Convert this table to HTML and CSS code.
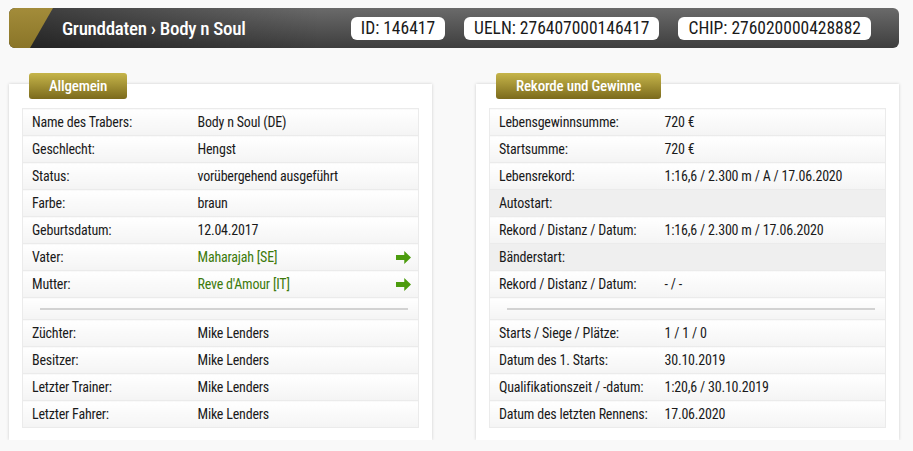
FILE: index.html
```html
<!DOCTYPE html>
<html lang="de">
<head>
    <meta charset="UTF-8">
    <title>Grunddaten - Body n Soul</title>
    <link rel="stylesheet" href="styles.css">
</head>
<body>
    <div class="headbar">
        <h1>Grunddaten › Body n Soul</h1>
        <div class="ids">
            <span class="pill">ID: 146417</span>
            <span class="pill">UELN: 276407000146417</span>
            <span class="pill">CHIP: 276020000428882</span>
        </div>
    </div>

    <div class="columns">
        <div class="panel">
            <div class="tab">Allgemein</div>
            <table class="data">
                <colgroup><col class="lbl-col"><col></colgroup>
                <tr><td>Name des Trabers:</td><td>Body n Soul (DE)</td></tr>
                <tr><td>Geschlecht:</td><td>Hengst</td></tr>
                <tr><td>Status:</td><td>vorübergehend ausgeführt</td></tr>
                <tr><td>Farbe:</td><td>braun</td></tr>
                <tr><td>Geburtsdatum:</td><td>12.04.2017</td></tr>
                <tr><td>Vater:</td><td><a href="#" class="link">Maharajah [SE]</a><span class="arrow"></span></td></tr>
                <tr><td>Mutter:</td><td><a href="#" class="link">Reve d'Amour [IT]</a><span class="arrow"></span></td></tr>
                <tr class="sep"><td colspan="2"><hr></td></tr>
                <tr><td>Züchter:</td><td>Mike Lenders</td></tr>
                <tr><td>Besitzer:</td><td>Mike Lenders</td></tr>
                <tr><td>Letzter Trainer:</td><td>Mike Lenders</td></tr>
                <tr><td>Letzter Fahrer:</td><td>Mike Lenders</td></tr>
            </table>
        </div>

        <div class="panel">
            <div class="tab">Rekorde und Gewinne</div>
            <table class="data">
                <colgroup><col class="lbl-col"><col></colgroup>
                <tr><td>Lebensgewinnsumme:</td><td>720 €</td></tr>
                <tr><td>Startsumme:</td><td>720 €</td></tr>
                <tr><td>Lebensrekord:</td><td>1:16,6 / 2.300 m / A / 17.06.2020</td></tr>
                <tr class="group"><td colspan="2">Autostart:</td></tr>
                <tr><td>Rekord / Distanz / Datum:</td><td>1:16,6 / 2.300 m / 17.06.2020</td></tr>
                <tr class="group"><td colspan="2">Bänderstart:</td></tr>
                <tr><td>Rekord / Distanz / Datum:</td><td>- / -</td></tr>
                <tr class="sep"><td colspan="2"><hr></td></tr>
                <tr><td>Starts / Siege / Plätze:</td><td>1 / 1 / 0</td></tr>
                <tr><td>Datum des 1. Starts:</td><td>30.10.2019</td></tr>
                <tr><td>Qualifikationszeit / -datum:</td><td>1:20,6 / 30.10.2019</td></tr>
                <tr><td>Datum des letzten Rennens:</td><td>17.06.2020</td></tr>
            </table>
        </div>
    </div>
</body>
</html>
```

FILE: styles.css
```css
body {
    font-family: Roboto, "Liberation Sans", sans-serif;
    font-stretch: 80%;
    background-color: #f9f9f9;
    color: #1a1a1a;
    margin: 0;
    padding: 8px 14px 0 9px;
}
.headbar {
    position: relative;
    display: flex;
    align-items: center;
    justify-content: space-between;
    height: 40px;
    padding: 0 28px 0 53px;
    border-radius: 6px;
    overflow: hidden;
    background: linear-gradient(to right, rgba(0,0,0,0.45), rgba(0,0,0,0) 35%),
                linear-gradient(to bottom, #6a6a6a, #3e3e3e);
}
.headbar::before {
    content: "";
    position: absolute;
    left: 0;
    top: 0;
    bottom: 0;
    width: 45px;
    background: linear-gradient(to bottom, #a38c3a, #8a7528);
    clip-path: polygon(0 0, 44px 0, 21px 100%, 0 100%);
}
.headbar h1 {
    margin: 0;
    color: white;
    font-size: 19px;
    font-weight: 500;
    letter-spacing: -0.3px;
}
.ids {
    display: flex;
    gap: 19px;
}
.pill {
    background: white;
    border-radius: 6px;
    height: 23px;
    line-height: 23px;
    padding: 0 10px;
    font-size: 17.5px;
    color: #1a1a1a;
}
.columns {
    display: flex;
    gap: 44px;
    margin-top: 36px;
}
.panel {
    flex: 1;
    background: white;
    padding: 0 13px 12px;
    box-shadow: 0 0 3px rgba(0,0,0,0.18);
}
.tab {
    width: fit-content;
    margin: -11px 0 0 7px;
    height: 26px;
    line-height: 26px;
    padding: 0 20px;
    border-radius: 3px;
    background: linear-gradient(to bottom, #c6b54a, #7b6a1c);
    color: white;
    font-size: 15px;
    font-weight: 500;
    letter-spacing: -0.2px;
}
.data {
    width: 100%;
    table-layout: fixed;
    border-collapse: collapse;
    margin-top: 9px;
    font-size: 14px;
    letter-spacing: -0.2px;
}
.lbl-col {
    width: 166px;
}
.data td {
    height: 26px;
    padding: 0 9px;
    white-space: nowrap;
    border-top: 1px solid #ebebeb;
    border-bottom: 1px solid #ebebeb;
    background: linear-gradient(to bottom, #ffffff, #f4f4f4);
    position: relative;
}
.data tr td:first-child {
    border-left: 1px solid #ebebeb;
}
.data tr td:last-child {
    border-right: 1px solid #ebebeb;
}
.data .group td {
    background: #efefef;
}
.data .sep td {
    height: 21px;
    padding: 0 10px 0 17px;
}
.data hr {
    border: none;
    border-top: 2px solid #d2d2d2;
    margin: 0;
}
.link {
    color: #3d7a0c;
    text-decoration: none;
}
.arrow {
    position: absolute;
    right: 7px;
    top: 7px;
    width: 15px;
    height: 13px;
    background: #4c9c0e;
    clip-path: polygon(0 30%, 55% 30%, 55% 0, 100% 50%, 55% 100%, 55% 70%, 0 70%);
}
```
